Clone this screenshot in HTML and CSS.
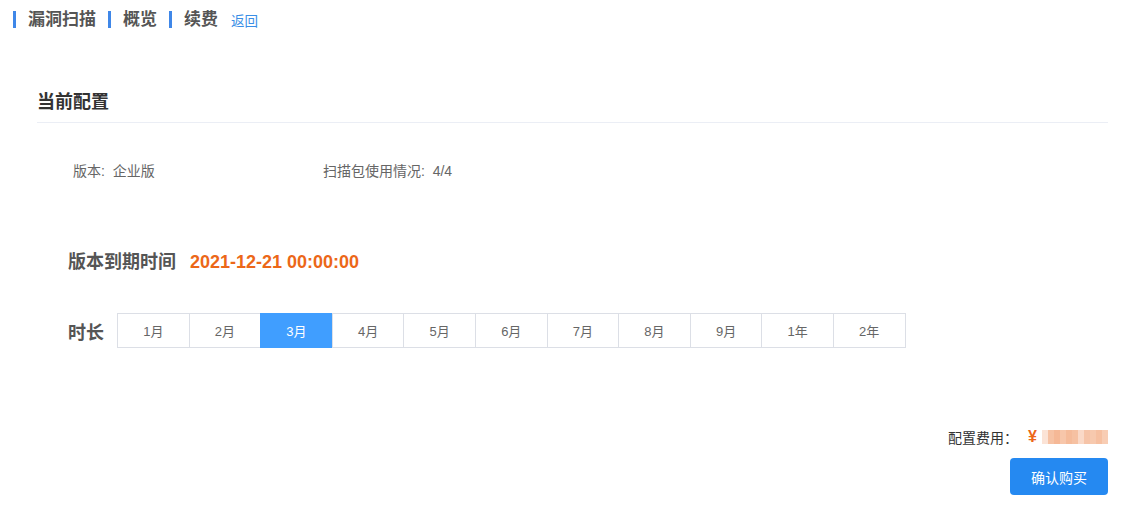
FILE: index.html
```html
<!DOCTYPE html>
<html lang="zh">
<head>
  <meta charset="UTF-8" />
  <title>续费</title>
  <link rel="stylesheet" href="styles.css">
</head>
<body>
  <div class="crumbs">
    <span class="crumb">漏洞扫描</span>
    <span class="crumb">概览</span>
    <span class="crumb">续费</span>
    <a class="back" href="#">返回</a>
  </div>

  <div class="page">
    <h2 class="title">当前配置</h2>

    <div class="info">
      <div class="info-item">版本:&nbsp; 企业版</div>
      <div class="info-item">扫描包使用情况:&nbsp; 4/4</div>
    </div>

    <div class="expire">
      <span class="label">版本到期时间</span>
      <span class="date">2021-12-21 00:00:00</span>
    </div>

    <div class="duration">
      <span class="label">时长</span>
      <div class="opts">
        <span class="opt">1月</span>
        <span class="opt">2月</span>
        <span class="opt on">3月</span>
        <span class="opt">4月</span>
        <span class="opt">5月</span>
        <span class="opt">6月</span>
        <span class="opt">7月</span>
        <span class="opt">8月</span>
        <span class="opt">9月</span>
        <span class="opt">1年</span>
        <span class="opt">2年</span>
      </div>
    </div>

    <div class="footer">
      <div class="cost">
        <span>配置费用：</span>
        <span class="yen">¥</span>
        <span class="blur">
          <i style="background:#fbe3d6"></i><i style="background:#f6c2a4"></i><i style="background:#f5b896"></i><i style="background:#f7c6aa"></i><i style="background:#f5bb9a"></i><i style="background:#f6c1a2"></i><i style="background:#fad9c7"></i><i style="background:#f6c4a8"></i><i style="background:#f7c9ae"></i><i style="background:#f6c0a1"></i><i style="background:#f8cdb4"></i>
        </span>
      </div>
      <button class="buy">确认购买</button>
    </div>
  </div>
</body>
</html>
```

FILE: styles.css
```css
body {
  margin: 0;
  font-family: "Liberation Sans", "Noto Sans CJK SC", sans-serif;
  color: #666;
  background: #fff;
}
.crumbs {
  display: flex;
  align-items: center;
  padding: 9px 0 0 13px;
  height: 20px;
}
.crumb {
  border-left: 3px solid #3f87e8;
  padding-left: 12px;
  margin-right: 12px;
  font-size: 17px;
  font-weight: bold;
  color: #555;
  line-height: 17px;
}
.back {
  font-size: 13.5px;
  color: #3a8ee6;
  text-decoration: none;
  margin-left: 1px;
  padding-top: 2px;
}
.page {
  margin: 0 17px 0 37px;
}
.title {
  margin: 0;
  padding: 60px 0 7px;
  font-size: 18px;
  color: #333;
  border-bottom: 1px solid #ebeef5;
  line-height: 26px;
}
.info {
  display: flex;
  font-size: 14px;
  color: #666;
  padding: 38px 0 0 36px;
  line-height: 20px;
}
.info-item {
  width: 250px;
  flex-shrink: 0;
}
.expire {
  display: flex;
  align-items: center;
  padding: 68px 0 0 31px;
  line-height: 26px;
}
.label {
  font-size: 18px;
  font-weight: bold;
  color: #555;
}
.date {
  font-size: 18px;
  font-weight: bold;
  color: #ec6718;
  margin-left: 14px;
}
.duration {
  display: flex;
  align-items: center;
  padding: 38px 0 0 31px;
}
.opts {
  display: flex;
  margin-left: 13px;
}
.opt {
  width: 70.6px;
  height: 33px;
  box-sizing: content-box;
  border: 1px solid #dcdfe6;
  margin-left: -1px;
  display: flex;
  align-items: center;
  justify-content: center;
  font-size: 13px;
  color: #666;
}
.opt:first-child {
  margin-left: 0;
}
.opt.on {
  background: #409eff;
  border-color: #409eff;
  color: #fff;
}
.footer {
  display: flex;
  flex-direction: column;
  align-items: flex-end;
  padding-top: 79px;
}
.cost {
  display: flex;
  align-items: center;
  font-size: 14px;
  color: #333;
  height: 20px;
}
.yen {
  color: #ec6718;
  font-weight: bold;
  font-size: 16px;
  margin-left: 10px;
}
.blur {
  display: flex;
  margin-left: 5px;
  height: 14px;
}
.blur i {
  width: 6px;
  height: 14px;
}
.buy {
  margin-top: 11px;
  width: 98px;
  height: 37px;
  border: none;
  border-radius: 4px;
  background: #2589f1;
  color: #fff;
  font-size: 14px;
  font-family: inherit;
}
```
